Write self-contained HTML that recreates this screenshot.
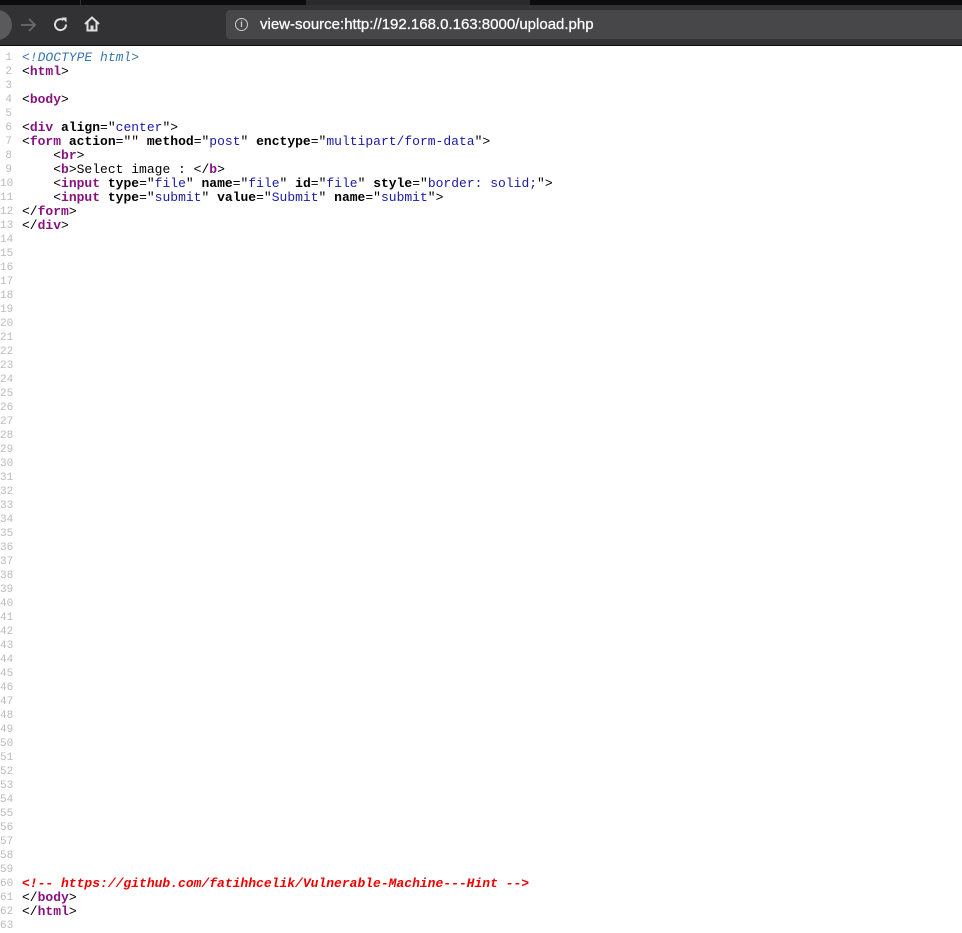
<!DOCTYPE html>
<html><head><style>
body{margin:0;background:#fff;width:962px;height:930px;overflow:hidden;position:relative}
.top{position:absolute;left:0;top:0;width:962px;height:5px;background:#0c0c0d}
.top .sel{position:absolute;top:0;height:5px}
.tb{position:absolute;left:0;top:5px;width:962px;height:40px;background:#323234;border-bottom:1px solid #0c0c0d}
.url{position:absolute;left:226px;top:5px;width:740px;height:29px;background:#474749;border-radius:4px;color:#f9f9fa;font:15px "Liberation Sans",sans-serif;line-height:29px;-webkit-text-stroke:0.3px #f9f9fa}
.url span{position:absolute;left:34px;top:0}
.info{position:absolute;left:9px;top:8px;width:11px;height:11px;border:1.3px solid #ccc;border-radius:50%;color:#ccc;font:bold 9px "Liberation Sans";text-align:center;line-height:11px;-webkit-text-stroke:0}
pre{position:absolute;left:0;top:51px;margin:0;font:13px/14px "Liberation Mono",monospace;color:#000}
.n{display:inline-block;width:12px;height:14px;line-height:14px;vertical-align:top;text-align:right;color:#bbb;margin-right:10px;font-size:11px}
.tg{color:#881280;font-weight:bold}
.at{font-weight:bold}
.v{color:#1a1aa6}
.d{color:#3a75b0;font-style:italic}
.c{color:#e00;font-weight:bold;font-style:italic}
</style></head><body>
<div class="top"><div class="sel" style="left:80px;width:226px;background:#0c0c0d;border-left:1px solid #333"></div><div class="sel" style="left:306px;width:224px;background:#2a2a2e"></div></div>
<div class="tb">
<div style="position:absolute;left:-18px;top:5px;width:30px;height:30px;border-radius:50%;background:#5a5a5c"></div>
<svg style="position:absolute;left:18px;top:11px" width="20" height="18" viewBox="0 0 20 18"><path d="M3 9H17M11 3L17 9L11 15" stroke="#6a6a6c" stroke-width="1.8" fill="none"/></svg>
<svg style="position:absolute;left:52px;top:11px" width="18" height="18" viewBox="0 0 18 18"><path d="M14 8.5A5.5 5.5 0 1 1 11.5 4" stroke="#ddd" stroke-width="2" fill="none"/><path d="M9.5 1.5H14.5V6.5Z" fill="#ddd"/></svg>
<svg style="position:absolute;left:83px;top:10px" width="18" height="18" viewBox="0 0 18 18"><path d="M2 9L9 2.5L16 9M4.5 7V15.5H13.5V7" stroke="#ddd" stroke-width="2" fill="none"/><rect x="7.5" y="10.5" width="3" height="5" fill="#ddd"/></svg>
<div class="url"><div class="info">i</div><span>view-source:http://192.168.0.163:8000/upload.php</span></div>
</div>
<pre><span class="n">1</span><span class="d">&lt;!DOCTYPE html&gt;</span>
<span class="n">2</span>&lt;<span class="tg">html</span>&gt;
<span class="n">3</span>
<span class="n">4</span>&lt;<span class="tg">body</span>&gt;
<span class="n">5</span>
<span class="n">6</span>&lt;<span class="tg">div</span> <span class="at">align</span>="<span class="v">center</span>"&gt;
<span class="n">7</span>&lt;<span class="tg">form</span> <span class="at">action</span>="" <span class="at">method</span>="<span class="v">post</span>" <span class="at">enctype</span>="<span class="v">multipart/form-data</span>"&gt;
<span class="n">8</span>    &lt;<span class="tg">br</span>&gt;
<span class="n">9</span>    &lt;<span class="tg">b</span>&gt;Select image : &lt;/<span class="tg">b</span>&gt;
<span class="n">10</span>    &lt;<span class="tg">input</span> <span class="at">type</span>="<span class="v">file</span>" <span class="at">name</span>="<span class="v">file</span>" <span class="at">id</span>="<span class="v">file</span>" <span class="at">style</span>="<span class="v">border: solid;</span>"&gt;
<span class="n">11</span>    &lt;<span class="tg">input</span> <span class="at">type</span>="<span class="v">submit</span>" <span class="at">value</span>="<span class="v">Submit</span>" <span class="at">name</span>="<span class="v">submit</span>"&gt;
<span class="n">12</span>&lt;/<span class="tg">form</span>&gt;
<span class="n">13</span>&lt;/<span class="tg">div</span>&gt;
<span class="n">14</span>
<span class="n">15</span>
<span class="n">16</span>
<span class="n">17</span>
<span class="n">18</span>
<span class="n">19</span>
<span class="n">20</span>
<span class="n">21</span>
<span class="n">22</span>
<span class="n">23</span>
<span class="n">24</span>
<span class="n">25</span>
<span class="n">26</span>
<span class="n">27</span>
<span class="n">28</span>
<span class="n">29</span>
<span class="n">30</span>
<span class="n">31</span>
<span class="n">32</span>
<span class="n">33</span>
<span class="n">34</span>
<span class="n">35</span>
<span class="n">36</span>
<span class="n">37</span>
<span class="n">38</span>
<span class="n">39</span>
<span class="n">40</span>
<span class="n">41</span>
<span class="n">42</span>
<span class="n">43</span>
<span class="n">44</span>
<span class="n">45</span>
<span class="n">46</span>
<span class="n">47</span>
<span class="n">48</span>
<span class="n">49</span>
<span class="n">50</span>
<span class="n">51</span>
<span class="n">52</span>
<span class="n">53</span>
<span class="n">54</span>
<span class="n">55</span>
<span class="n">56</span>
<span class="n">57</span>
<span class="n">58</span>
<span class="n">59</span>
<span class="n">60</span><span class="c">&lt;!-- https://github.com/fatihhcelik/Vulnerable-Machine---Hint --&gt;</span>
<span class="n">61</span>&lt;/<span class="tg">body</span>&gt;
<span class="n">62</span>&lt;/<span class="tg">html</span>&gt;
<span class="n">63</span>
</pre>
</body></html>
